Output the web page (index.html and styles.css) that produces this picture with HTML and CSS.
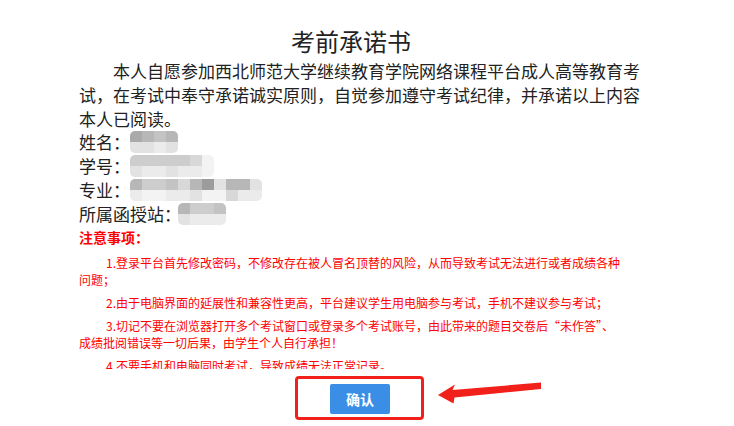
FILE: index.html
```html
<!DOCTYPE html>
<html lang="zh-CN">
    <head>
        <meta charset="UTF-8">
        <meta name="viewport" content="width=device-width, initial-scale=1.0">
        <title>考前承诺书</title>
        <link rel="stylesheet" href="styles.css">
    </head>
    <body>
        <div class="paper">
            <h1 class="titulo">考前承诺书</h1>
            <p class="texto recuo">本人自愿参加西北师范大学继续教育学院网络课程平台成人高等教育考试，在考试中奉守承诺诚实原则，自觉参加遵守考试纪律，并承诺以上内容</p>
            <p class="texto">本人已阅读。</p>
            <p class="texto">姓名：<span class="mosaico m4"><i class="c2"></i><i class="c3"></i><i class="c4"></i><i class="c3"></i><i class="c7"></i><i class="c7"></i><i class="c8"></i><i class="c7"></i></span></p>
            <p class="texto">学号：<span class="mosaico m7"><i class="c5"></i><i class="c5"></i><i class="c5"></i><i class="c5"></i><i class="c5"></i><i class="c6"></i><i class="c9"></i><i class="c7"></i><i class="c8"></i><i class="c8"></i><i class="c7"></i><i class="c8"></i><i class="c8"></i><i class="c9"></i></span></p>
            <p class="texto">专业：<span class="mosaico m11"><i class="c3"></i><i class="c5"></i><i class="c5"></i><i class="c4"></i><i class="c6"></i><i class="c3"></i><i class="c1"></i><i class="c7"></i><i class="c3"></i><i class="c3"></i><i class="c7"></i><i class="c8"></i><i class="c9"></i><i class="c9"></i><i class="c8"></i><i class="c8"></i><i class="c7"></i><i class="c9"></i><i class="c9"></i><i class="c6"></i><i class="c8"></i><i class="c8"></i></span></p>
            <p class="texto">所属函授站：<span class="mosaico m4 colado"><i class="c3"></i><i class="c5"></i><i class="c5"></i><i class="c4"></i><i class="c7"></i><i class="c8"></i><i class="c8"></i><i class="c8"></i></span></p>
            <p class="aviso">注意事项：</p>
            <div class="regras">
                <p>1.登录平台首先修改密码，不修改存在被人冒名顶替的风险，从而导致考试无法进行或者成绩各种问题；</p>
                <p>2.由于电脑界面的延展性和兼容性更高，平台建议学生用电脑参与考试，手机不建议参与考试；</p>
                <p>3.切记不要在浏览器打开多个考试窗口或登录多个考试账号，由此带来的题目交卷后“未作答”、成绩批阅错误等一切后果，由学生个人自行承担！</p>
                <p>4.不要手机和电脑同时考试，导致成绩无法正常记录。</p>
            </div>
        </div>

        <div class="rodape">
            <div class="botao-area">
                <button class="botao">确认</button>
                <span class="marca"></span>
            </div>
        </div>

        <svg class="seta" width="115" height="35" viewBox="430 375 115 35">
            <polygon points="438,395 455,384.5 452.5,390 541,382.5 541,389 454.5,397.5 453.5,403.5" fill="#f2201a"/>
        </svg>
    </body>
</html>
```

FILE: styles.css
```css
html, body {
    height: 100%;
}

body {
    margin: 0;
    background: #fff;
    color: #222;
    font-family: 'Noto Sans CJK SC', 'Microsoft YaHei', sans-serif;
}

.paper {
    width: 576px;
    height: 369px;
    margin: 0 auto;
    padding-top: 23px;
    box-sizing: border-box;
    overflow: hidden;
}

.titulo {
    margin: 0;
    padding-right: 32px;
    font-size: 24px;
    font-weight: normal;
    line-height: 36px;
    text-align: center;
}

.texto {
    margin: 0;
    font-size: 17px;
    line-height: 1.4;
    white-space: nowrap;
}

.recuo {
    text-indent: 2em;
    white-space: normal;
}

.mosaico {
    display: inline-grid;
    grid-template-rows: 11px 11px;
    vertical-align: top;
    margin-top: 1px;
    border-radius: 5px;
    overflow: hidden;
    text-indent: 0;
}

.mosaico i {
    display: block;
}

.m4 { grid-template-columns: repeat(4, 12px); }
.m7 { grid-template-columns: repeat(7, 12px); }
.m11 { grid-template-columns: repeat(11, 12px); }

.colado {
    margin-left: -3px;
}

.c1 { background: #9c9c9c; }
.c2 { background: #aaaaaa; }
.c3 { background: #b7b7b7; }
.c4 { background: #c3c3c3; }
.c5 { background: #cdcdcd; }
.c6 { background: #d8d8d8; }
.c7 { background: #e2e2e2; }
.c8 { background: #ebebeb; }
.c9 { background: #f3f3f3; }

.aviso {
    margin: 0;
    color: #f00;
    font-size: 14px;
    font-weight: bold;
    line-height: 23.8px;
}

.regras {
    margin-top: 5px;
    margin-right: 30px;
    color: #f00;
    font-size: 12px;
    line-height: 17px;
}

.regras p {
    margin: 0 0 6px;
    text-indent: 27px;
}

.rodape {
    padding-top: 15px;
    padding-right: 14px;
    display: flex;
    justify-content: center;
}

.botao-area {
    position: relative;
}

.botao {
    width: 60px;
    height: 30px;
    border: none;
    border-radius: 2px;
    background: #3a8ee6;
    color: #fff;
    font-family: 'Noto Sans CJK SC', sans-serif;
    font-size: 14px;
    font-weight: bold;
    cursor: pointer;
}

.marca {
    position: absolute;
    left: -35px;
    right: -34px;
    top: -8px;
    bottom: -6px;
    border: 3px solid #f2201a;
    border-radius: 4px;
}

.seta {
    position: absolute;
    left: 430px;
    top: 375px;
}
```
